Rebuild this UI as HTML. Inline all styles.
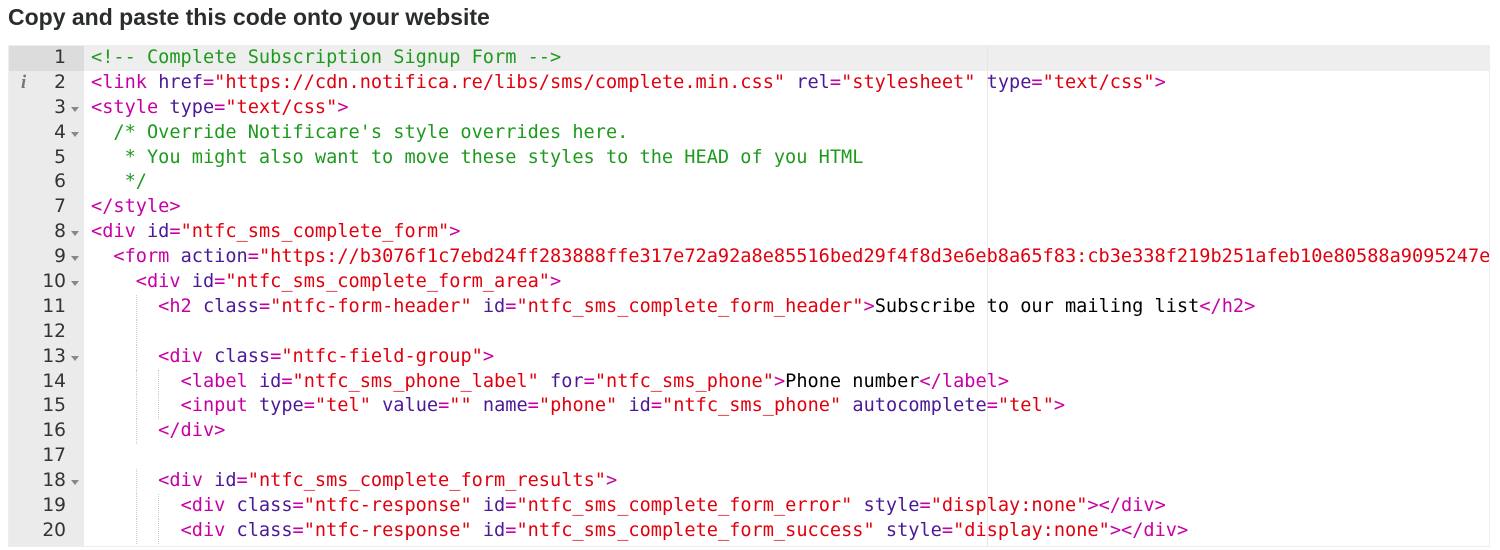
<!DOCTYPE html>
<html><head><meta charset="utf-8"><style>
body{margin:0;background:#fff;width:1500px;height:550px;overflow:hidden;font-family:"Liberation Sans",sans-serif}
h1{position:absolute;left:8px;top:4px;margin:0;font-size:23px;font-weight:bold;color:#2a2d2e;letter-spacing:0}
#ed{position:absolute;left:8px;top:45px;width:1480px;height:500px;border:1px solid #eee;overflow:hidden;background:#fff}
#gut{position:absolute;left:0;top:0;width:75px;height:100%;background:#ebebeb}
.ln{height:24.9px;line-height:24.9px;text-align:right;padding-right:18px;color:#333;font-family:"DejaVu Sans",sans-serif;font-size:18.6px;position:relative}
.ln.f:after{content:"";position:absolute;right:5px;top:11px;border-left:4px solid transparent;border-right:4px solid transparent;border-top:5px solid #888}
.ln.a{background:#dcdcdc}
#act{position:absolute;left:75px;top:0;right:0;height:24.9px;background:#eeeeee}
#code{position:absolute;left:82px;top:0;font-family:"DejaVu Sans Mono",monospace;font-size:18.6px}
.l{height:24.9px;line-height:24.9px;position:relative;white-space:pre}
.g{position:absolute;top:0;height:24.9px;border-left:1px dotted #ccc}
#pm{position:absolute;left:978px;top:0;height:100%;border-left:1px solid #e6e6e6}
.t{color:#c800a4}.at{color:#4b1896}.s{color:#e0000e}.c{color:#1e9a1e}.x{color:#000}
</style></head><body>
<h1>Copy and paste this code onto your website</h1>
<div id="ed">
<div id="act"></div>
<div id="pm"></div>
<div id="gut">
<div class="ln a">1</div>
<div class="ln"><span style="position:absolute;left:12px;color:#777;font-style:italic;font-family:'Liberation Serif',serif;font-weight:bold">i</span>2</div>
<div class="ln f">3</div><div class="ln f">4</div><div class="ln">5</div><div class="ln">6</div><div class="ln">7</div>
<div class="ln f">8</div><div class="ln f">9</div><div class="ln f">10</div><div class="ln">11</div><div class="ln">12</div>
<div class="ln f">13</div><div class="ln">14</div><div class="ln">15</div><div class="ln">16</div><div class="ln">17</div>
<div class="ln f">18</div><div class="ln">19</div><div class="ln">20</div>
</div>
<div id="code">
<div class="l c">&lt;!-- Complete Subscription Signup Form --&gt;</div>
<div class="l"><span class="t">&lt;link</span> <span class="at">href</span><span class="t">=</span><span class="s">"https://cdn.notifica.re/libs/sms/complete.min.css"</span> <span class="at">rel</span><span class="t">=</span><span class="s">"stylesheet"</span> <span class="at">type</span><span class="t">=</span><span class="s">"text/css"</span><span class="t">&gt;</span></div>
<div class="l"><span class="t">&lt;style</span> <span class="at">type</span><span class="t">=</span><span class="s">"text/css"</span><span class="t">&gt;</span></div>
<div class="l c">  /* Override Notificare's style overrides here.</div>
<div class="l c">   * You might also want to move these styles to the HEAD of you HTML</div>
<div class="l c">   */</div>
<div class="l"><span class="t">&lt;/style&gt;</span></div>
<div class="l"><span class="t">&lt;div</span> <span class="at">id</span><span class="t">=</span><span class="s">"ntfc_sms_complete_form"</span><span class="t">&gt;</span></div>
<div class="l">  <span class="t">&lt;form</span> <span class="at">action</span><span class="t">=</span><span class="s">"https://b3076f1c7ebd24ff283888ffe317e72a92a8e85516bed29f4f8d3e6eb8a65f83:cb3e338f219b251afeb10e80588a9095247e</span></div>
<div class="l">    <span class="t">&lt;div</span> <span class="at">id</span><span class="t">=</span><span class="s">"ntfc_sms_complete_form_area"</span><span class="t">&gt;</span></div>
<div class="l"><span class="g" style="left:4ch"></span>      <span class="t">&lt;h2</span> <span class="at">class</span><span class="t">=</span><span class="s">"ntfc-form-header"</span> <span class="at">id</span><span class="t">=</span><span class="s">"ntfc_sms_complete_form_header"</span><span class="t">&gt;</span><span class="x">Subscribe to our mailing list</span><span class="t">&lt;/h2&gt;</span></div>
<div class="l"><span class="g" style="left:4ch"></span> </div>
<div class="l"><span class="g" style="left:4ch"></span>      <span class="t">&lt;div</span> <span class="at">class</span><span class="t">=</span><span class="s">"ntfc-field-group"</span><span class="t">&gt;</span></div>
<div class="l"><span class="g" style="left:4ch"></span><span class="g" style="left:6ch"></span>        <span class="t">&lt;label</span> <span class="at">id</span><span class="t">=</span><span class="s">"ntfc_sms_phone_label"</span> <span class="at">for</span><span class="t">=</span><span class="s">"ntfc_sms_phone"</span><span class="t">&gt;</span><span class="x">Phone number</span><span class="t">&lt;/label&gt;</span></div>
<div class="l"><span class="g" style="left:4ch"></span><span class="g" style="left:6ch"></span>        <span class="t">&lt;input</span> <span class="at">type</span><span class="t">=</span><span class="s">"tel"</span> <span class="at">value</span><span class="t">=</span><span class="s">""</span> <span class="at">name</span><span class="t">=</span><span class="s">"phone"</span> <span class="at">id</span><span class="t">=</span><span class="s">"ntfc_sms_phone"</span> <span class="at">autocomplete</span><span class="t">=</span><span class="s">"tel"</span><span class="t">&gt;</span></div>
<div class="l"><span class="g" style="left:4ch"></span>      <span class="t">&lt;/div&gt;</span></div>
<div class="l"> </div>
<div class="l"><span class="g" style="left:4ch"></span>      <span class="t">&lt;div</span> <span class="at">id</span><span class="t">=</span><span class="s">"ntfc_sms_complete_form_results"</span><span class="t">&gt;</span></div>
<div class="l"><span class="g" style="left:4ch"></span><span class="g" style="left:6ch"></span>        <span class="t">&lt;div</span> <span class="at">class</span><span class="t">=</span><span class="s">"ntfc-response"</span> <span class="at">id</span><span class="t">=</span><span class="s">"ntfc_sms_complete_form_error"</span> <span class="at">style</span><span class="t">=</span><span class="s">"display:none"</span><span class="t">&gt;&lt;/div&gt;</span></div>
<div class="l"><span class="g" style="left:4ch"></span><span class="g" style="left:6ch"></span>        <span class="t">&lt;div</span> <span class="at">class</span><span class="t">=</span><span class="s">"ntfc-response"</span> <span class="at">id</span><span class="t">=</span><span class="s">"ntfc_sms_complete_form_success"</span> <span class="at">style</span><span class="t">=</span><span class="s">"display:none"</span><span class="t">&gt;&lt;/div&gt;</span></div>
</div>
</div>
</body></html>
